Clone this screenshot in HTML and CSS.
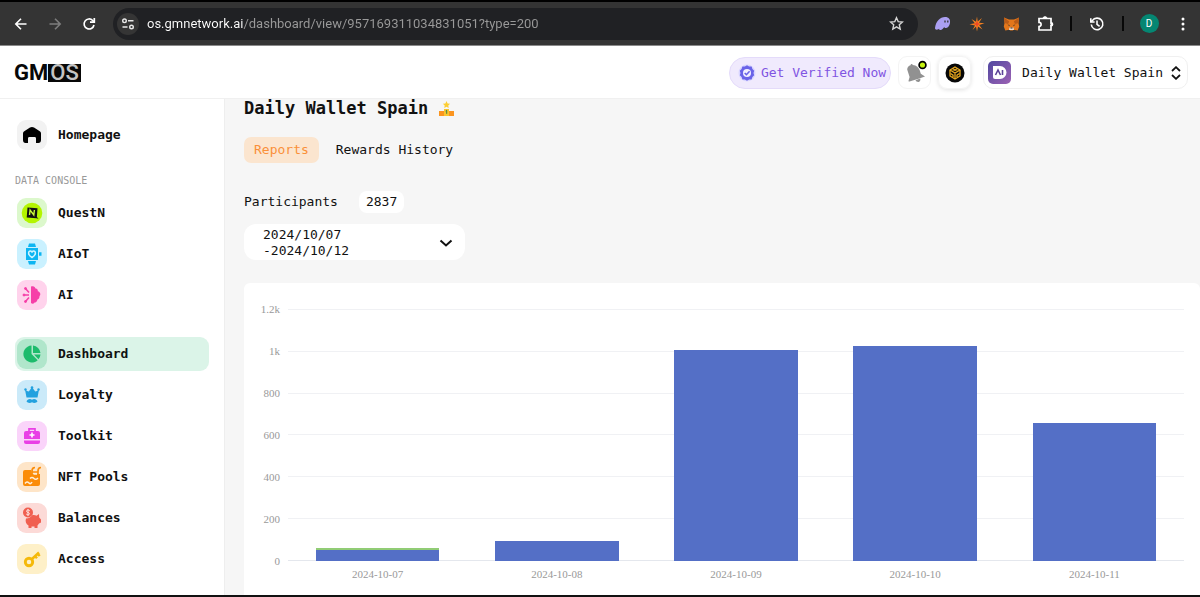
FILE: index.html
```html
<!DOCTYPE html>
<html lang="en">
<head>
<meta charset="utf-8">
<meta name="viewport" content="width=device-width, initial-scale=1">
<title>GMOS Dashboard</title>
<link rel="stylesheet" href="styles.css">
</head>
<body>
<div class="browser-bar">
  <button class="tool" aria-label="Back"><svg width="14" height="14" viewBox="0 0 14 14" fill="none" stroke="#fff" stroke-width="1.6"><path d="M12.500 7H2M7 1.800 1.800 7 7 12.200"/></svg></button>
  <button class="tool" aria-label="Forward"><svg width="14" height="14" viewBox="0 0 14 14" fill="none" stroke="#7d7d7d" stroke-width="1.6"><path d="M1.500 7H12M7 1.800 12.200 7 7 12.200"/></svg></button>
  <button class="tool" aria-label="Reload"><svg width="14" height="14" viewBox="0 0 14 14" fill="none" stroke="#fff" stroke-width="1.7"><path d="M12 8A5 5 0 1 1 10.700 3.500L12 4.800"/><path d="M12.300 1v4.200H8"/></svg></button>
  <div class="address">
    <button class="site-info" aria-label="Site information"><svg width="14" height="14" viewBox="0 0 14 14" fill="none" stroke="#e8e8e8" stroke-width="1.4"><circle cx="3.500" cy="3.800" r="1.800"/><path d="M7 3.800h5.500M1.500 10h5"/><circle cx="10.500" cy="10" r="1.800"/></svg></button>
    <input class="url" type="text" aria-label="Address" value="os.gmnetwork.ai/dashboard/view/957169311034831051?type=200">
    <button class="tool bookmark" aria-label="Bookmark"><svg width="15" height="15" viewBox="0 0 15 15" fill="none" stroke="#d5d5d5" stroke-width="1.4"><path d="m7.500 1.700 1.700 3.900 4.300.4-3.200 2.800.9 4.200-3.700-2.200L3.800 13l.9-4.200L1.500 6l4.300-.4z"/></svg></button>
  </div>
  <button class="tool" aria-label="Phantom"><svg width="18" height="16" viewBox="0 0 18 16"><path d="M1 12C2 5 6 1 11 1c4 0 5.500 2.500 5 6-.4 3-2.500 5-4.200 5-1 0-1.500-.5-1.500-1-1 1.500-2.300 3-3.800 3-1.200 0-1.500-.7-1.300-1.300C4 13.600 1 14.500 1 12z" fill="#ab9ff2"/><path d="M11 4.500v2M13.800 4.500v2" stroke="#333" stroke-width="1.3"/></svg></button>
  <button class="tool" aria-label="Spark"><svg width="16" height="16" viewBox="0 0 16 16"><path d="m8 .5.7 5L13 2l-3 4.700 5.500.5L10.200 9l3.300 4.500-4.500-3L8 15.500l-1-5L3.500 14 6 9.500.5 8.300l5.300-1L2.500 3 7 5.800z" fill="#f58220"/><path d="m8 4.500 1 2.500 2.500 1L9 9l-1 2.500L7 9 4.500 8 7 7z" fill="#ef4923"/></svg></button>
  <button class="tool" aria-label="MetaMask"><svg width="17" height="16" viewBox="0 0 17 16"><path d="m1 1.500 5 2h5l5-2-.5 5.500.7 3.500-1.500 4-4-.8-1 .8H7.300l-1-.8-4 .8-1.500-4L1.500 7z" fill="#e2761b"/><path d="m1 1.500 5.200 4L5 8 1.500 7zM16 1.500l-5.200 4L12 8l3.500-1z" fill="#b85b18"/><path d="M6.500 11.500h4l.5 2.500H6z" fill="#e6d7cb"/><path d="m4.500 8.500 2 .5v1.300zM12.500 8.500l-2 .5v1.300zM7.500 11.500h2v1h-2z" fill="#30312d"/></svg></button>
  <button class="tool" aria-label="Extensions"><svg width="17" height="17" viewBox="0 0 17 17" fill="none" stroke="#fff" stroke-width="1.7"><path d="M2 3.500h12v4.300a1.300 1.300 0 0 1 0 3V15H2v-3.500a2.100 2.100 0 0 0 0-4.200z"/><path d="M6 3.300a2 1.600 0 0 1 4 0zM14 7.800a1.500 1.500 0 0 1 0 3z" fill="#fff" stroke-width="1"/></svg></button>
  <span class="divider"></span>
  <button class="tool" aria-label="History"><svg width="16" height="16" viewBox="0 0 16 16" fill="none" stroke="#fff" stroke-width="1.6"><path d="M2.300 8.500A5.800 5.800 0 1 0 3.300 4.600L2.200 6"/><path d="M1.800 2.300V6h3.800M8 4.500V8.300l2.600 2"/></svg></button>
  <span class="divider"></span>
  <button class="tool" aria-label="Profile"><span class="profile">D</span></button>
  <button class="tool" aria-label="Menu"><svg width="4" height="14" viewBox="0 0 4 14" fill="#fff"><circle cx="2" cy="2" r="1.500"/><circle cx="2" cy="7" r="1.500"/><circle cx="2" cy="12" r="1.500"/></svg></button>
</div>

<header class="app-header">
  <a class="logo" href="#" aria-label="GMOS">GM<span class="logo-box">OS</span></a>
  <button class="verify"><svg width="18" height="18" viewBox="0 0 18 18"><circle cx="9" cy="9" r="8.500" fill="#d9d6ff"/><path d="m9 1.200 2.100 1.300 2.500.1.800 2.400 1.800 1.700L15.500 9l.7 2.300-1.800 1.700-.8 2.400-2.500.1L9 16.800l-2.100-1.300-2.500-.1-.8-2.400-1.800-1.700L2.500 9l-.7-2.300L3.600 5l.8-2.400 2.500-.1z" fill="#6a63e8"/><circle cx="9" cy="9" r="4" fill="#f2efff"/><path d="m6.700 9 1.700 1.700 3.200-3.400" fill="none" stroke="#6a63e8" stroke-width="1.600"/></svg>Get Verified Now</button>
  <button class="square" aria-label="Notifications"><svg width="24" height="26" viewBox="0 0 24 26"><path d="M4.200 9.500c0-2.300 1.500-3.900 3.300-4.300.3-1.500 1.900-1.500 2.300-.3 3.700.2 6 2.500 7 5.600l1 3.300 4.200 2.700-6.500 2.200-9 2.800c-.8.200-1.200-.3-.9-1l1-3.500z" fill="#919191"/><path d="m12.500 20.300 4.700-1.700c.6 1.700-.2 3-1.500 3.300-1.200.3-2.600-.4-3.200-1.600z" fill="#919191"/><circle cx="19.500" cy="5" r="3.400" fill="#c6f311" stroke="#000" stroke-width="1.700"/></svg></button>
  <button class="square raised" aria-label="Network"><svg width="20" height="20" viewBox="0 0 20 20"><circle cx="10" cy="10" r="9.500" fill="#080808"/><g fill="none" stroke="#e9a91f" stroke-width="1.300"><path d="m10 4 5 3v6l-5 3-5-3V7z"/><path d="m5 7 5 3 5-3M10 10v6M7.500 5.500l5 3M12.500 5.500l-5 3M5.500 10.500 8 12v2M14.500 10.500 12 12v2"/></g></svg></button>
  <button class="workspace"><svg width="23" height="23" viewBox="0 0 23 23"><defs><linearGradient id="brand" x1="0" y1="0" x2="1" y2="1"><stop stop-color="#5148a0"/><stop offset="1" stop-color="#9c62b4"/></linearGradient></defs><rect width="23" height="23" rx="5" fill="url(#brand)"/><path d="M5 5h7a6.500 6.500 0 0 1 0 13H7a2 2 0 0 1-2-2z" fill="#fff"/><path d="m7.500 14 2.500-5 2.500 5M14.500 9v5" fill="none" stroke="#5c4398" stroke-width="1.600"/></svg><span>Daily Wallet Spain</span><svg width="10" height="14" viewBox="0 0 10 14" fill="none" stroke="#111" stroke-width="1.800"><path d="m1 5 4-3.800L9 5M1 9l4 3.800L9 9"/></svg></button>
</header>

<div class="app-body">
  <nav class="sidebar" aria-label="Main">
    <a class="item" href="#"><span class="tile home"><svg width="20" height="20" viewBox="0 0 20 20"><path d="M1 8.500C1 7 2 6.300 3 5.700l5-3.200c1.300-.8 2.700-.8 4 0l5 3.200c1 .6 2 1.300 2 2.800V15c0 2-1 3-2.500 3H14v-4.500c0-1-.5-1.500-1.500-1.500h-5C6.500 12 6 12.500 6 13.500V18H3.500C2 18 1 17 1 15z" fill="#000"/></svg></span>Homepage</a>
    <h2 class="group-title">DATA CONSOLE</h2>
    <a class="item" href="#"><span class="tile quest"><svg width="22" height="22" viewBox="0 0 22 22"><circle cx="11" cy="11" r="10.300" fill="#b4f500"/><path d="m6.500 5.500 10 .8-.6 8.700 1.600 1.800-2-.6-9.800-.7z" fill="#111"/><path d="m8.500 13 .6-5 3.700 5 .6-5" fill="none" stroke="#c9fa3a" stroke-width="1.400"/></svg></span>QuestN</a>
    <a class="item" href="#"><span class="tile watch"><svg width="22" height="22" viewBox="0 0 22 22"><path d="M8 .5h6l1 3.500H7zM7 18h8l-1 3.500H8zM5 5h12v12H5zM18 9.200h2.500v3.600H18z" fill="#0db5f2"/><path d="M11 14.500c-5-3-3.500-6.500-1.700-6.500.9 0 1.300.5 1.700 1 .4-.5.800-1 1.700-1 1.800 0 3.300 3.500-1.700 6.500z" fill="none" stroke="#d3f5ff" stroke-width="1.500"/></svg></span>AIoT</a>
    <a class="item" href="#"><span class="tile ai"><svg width="20" height="20" viewBox="0 0 20 20" fill="#f63fa8" stroke="#f63fa8"><path d="M9 1.500c3-1 4 .5 4.500 2 2 0 2.500 1.500 2.300 2.800C18.500 7 19 10 17.500 11c0 2-.5 3-2 3.500-.5 2.500-2 3-3 3C12 19 10 19 9 18z" stroke="none"/><g fill="none" stroke-width="1.500"><path d="M7 10H2.500M7 7.500 3.500 3.500M7 12.500l-3.500 4"/></g><circle cx="2" cy="10" r="1"/><circle cx="3.500" cy="3.500" r="1"/><circle cx="3.500" cy="16.500" r="1"/></svg></span>AI</a>
    <a class="item active section-start" href="#" aria-current="page"><span class="tile dash"><svg width="20" height="20" viewBox="0 0 20 20" fill="#1dbb6c"><path d="M9.500 1.500V10l6.200 6.200A8.500 8.500 0 1 1 9.500 1.500z"/><path d="M11 1.500a8.300 8.300 0 0 1 7.500 7.500H11zM12 10.500h6.500a8 8 0 0 1-2 4.700z"/></svg></span>Dashboard</a>
    <a class="item" href="#"><span class="tile loyalty"><svg width="20" height="20" viewBox="0 0 20 20" fill="#23a1df"><path d="M3 4.500 6.500 7 10 2l3.500 5L17 4.500l-1.500 8h-11z"/><path d="M5 6.500h10l-.5 5h-9z"/><circle cx="3.500" cy="4.500" r="1.200"/><circle cx="10" cy="2.500" r="1.300"/><circle cx="16.500" cy="4.500" r="1.200"/><path d="M10 14.800c2-1.500 4-.8 5.500 1.500-1 2-4 2-5.500 1-1.500 1-4.500 1-5.500-1 1.500-2.300 3.500-3 5.500-1.500z"/></svg></span>Loyalty</a>
    <a class="item" href="#"><span class="tile toolkit"><svg width="20" height="20" viewBox="0 0 20 20"><path d="M7 5V2.800h6V5" fill="none" stroke="#e93fe6" stroke-width="1.700"/><path d="M4 5h12a2 2 0 0 1 2 2v6H2V7a2 2 0 0 1 2-2zM2 14.500h16V16a2 2 0 0 1-2 2H4a2 2 0 0 1-2-2z" fill="#e93fe6"/><path d="M10 6.500v5M7.500 9h5" stroke="#fff" stroke-width="1.600"/></svg></span>Toolkit</a>
    <a class="item" href="#"><span class="tile pools"><svg width="22" height="22" viewBox="0 0 22 22"><path d="M4 4h6l1 4h8v10a2 2 0 0 1-2 2H4a2 2 0 0 1-2-2V6a2 2 0 0 1 2-2z" fill="#fb8c08"/><path d="M11 13V5c0-3 1.500-3.500 3-3.500M17 13V5c0-3 1.500-3.500 3-3.500M11 6h6M11 9.500h6" fill="none" stroke="#fb8c08" stroke-width="1.700"/><path d="M4 17.500c1.500-2 2.500-2 4-.5s2.500 0 3-1M9 12.500c1.500-1.500 2.500-1.500 4 0s3 .5 4-.5M12.500 8h3.500" fill="none" stroke="#ffeed8" stroke-width="1.500"/></svg></span>NFT Pools</a>
    <a class="item" href="#"><span class="tile balances"><svg width="22" height="22" viewBox="0 0 22 22"><path d="M5 11.500c3-.2 5-1.500 6.500-3.500 1.500-.3 3 0 4 .7L18 7l.2 3.500 1.800 2v3l-2 1-1.500 2V21h-3v-1.500h-3V21h-3v-2.500C5 17 4 14 5 11.500z" fill="#f05f50"/><circle cx="7" cy="5.500" r="5" fill="#f05f50"/><path d="M8.800 3.800C7.500 2.500 5.200 3 5.500 4.500c.3 1.300 3 .7 3 2.200 0 1.300-2.300 1.500-3.300.3M7 2v7" fill="none" stroke="#fde3df" stroke-width="1"/></svg></span>Balances</a>
    <a class="item" href="#"><span class="tile access"><svg width="20" height="20" viewBox="0 0 20 20" fill="none" stroke="#f5b909"><circle cx="7" cy="13" r="3.700" stroke-width="2.900"/><path d="m10 10 7-6.500M13 7l2 2.300M15.500 4.500l2.200 2.500" stroke-width="2.500"/></svg></span>Access</a>
  </nav>

  <main class="content">
    <h1 class="title">Daily Wallet Spain <svg width="17" height="17" viewBox="0 0 17 17"><path d="M6 9h5v7H6z" fill="#f8c530"/><path d="M1 11h5v5H1zM11 11h5v5h-5z" fill="#fb951f"/><path d="m8.500 1 1.100 2.400 2.500.3-1.800 1.800.4 2.500-2.200-1.200L6.300 8l.4-2.500-1.800-1.800 2.500-.3z" fill="#fdce33"/><path d="m7.700 11 1-.7v3.500" fill="none" stroke="#3b8045"/></svg></h1>
    <div class="tabs" role="tablist">
      <button class="tab selected" role="tab" aria-selected="true">Reports</button>
      <button class="tab" role="tab" aria-selected="false">Rewards History</button>
    </div>
    <div class="participants"><span>Participants</span><span class="count">2837</span></div>
    <button class="range" aria-haspopup="listbox"><span>2024/10/07<br>-2024/10/12</span><svg width="14" height="9" viewBox="0 0 14 9" fill="none" stroke="#111" stroke-width="2"><path d="m1.500 1.500 5.500 5 5.500-5"/></svg></button>

    <section class="chart" aria-label="Participants per day">
      <ul class="y-axis"><li>1.2k</li><li>1k</li><li>800</li><li>600</li><li>400</li><li>200</li><li>0</li></ul>
      <div class="plot">
        <div class="grid-lines"><i></i><i></i><i></i><i></i><i></i><i></i></div>
        <div class="bars">
          <div class="slot"><div class="bar capped" style="height:5%"></div></div>
          <div class="slot"><div class="bar" style="height:8%"></div></div>
          <div class="slot"><div class="bar" style="height:83.800%"></div></div>
          <div class="slot"><div class="bar" style="height:85.500%"></div></div>
          <div class="slot"><div class="bar" style="height:54.800%"></div></div>
        </div>
      </div>
      <ul class="x-axis"><li>2024-10-07</li><li>2024-10-08</li><li>2024-10-09</li><li>2024-10-10</li><li>2024-10-11</li></ul>
    </section>
  </main>
</div>
</body>
</html>
```
FILE: styles.css
```css
* { box-sizing: border-box; }

body {
  margin: 0;
  height: 100vh;
  display: flex;
  flex-direction: column;
  overflow: hidden;
  background: #fff;
  border-bottom: 2px solid #111;
  color: #111;
  font: 13px/16px "DejaVu Sans Mono", monospace;
}

button {
  margin: 0;
  padding: 0;
  border: 0;
  background: none;
  color: inherit;
  font: inherit;
  cursor: pointer;
}

ul { margin: 0; padding: 0; list-style: none; }
svg { display: block; flex: none; }

/* Browser toolbar */
.browser-bar {
  flex: none;
  display: flex;
  align-items: center;
  height: 46px;
  padding-left: 4px;
  background: #343434;
  border-top: 2px solid #000;
  border-bottom: 1px solid #8a8a8a;
}
.tool {
  display: flex;
  align-items: center;
  justify-content: center;
  width: 34px;
  height: 32px;
}
.address {
  flex: 1;
  display: flex;
  align-items: center;
  gap: 8px;
  height: 32px;
  margin: 0 8px 0 7px;
  padding: 0 5px 0 4px;
  border-radius: 16px;
  background: #202124;
}
.site-info {
  display: grid;
  place-items: center;
  width: 22px;
  height: 22px;
  border-radius: 50%;
  background: #353535;
}
.url {
  flex: 1;
  min-width: 0;
  padding: 0;
  border: 0;
  outline: 0;
  color: transparent;
  background: linear-gradient(90deg, #fff 96px, #9a9a9a 96px);
  background-clip: text;
  -webkit-background-clip: text;
  font: 13px/20px Roboto, sans-serif;
}
.divider { width: 2px; height: 15px; margin: 0 8px; background: #080808; }
.profile {
  display: grid;
  place-items: center;
  width: 19px;
  height: 19px;
  border-radius: 50%;
  background: #058672;
  color: #fff;
  font: 10px/19px Roboto, sans-serif;
}

/* Application header */
.app-header {
  flex: none;
  display: flex;
  align-items: center;
  height: 53px;
  padding: 1px 12px 0 14px;
  border-bottom: 1px solid #f0f0f0;
}
.logo {
  display: flex;
  align-items: center;
  margin-right: auto;
  color: #080808;
  text-decoration: none;
  font: 700 22px/18px Roboto, sans-serif;
}
.logo-box { padding: 0 2px; background: #080808; color: #c4c4c4; font-weight: 500; }
.verify {
  display: flex;
  align-items: center;
  gap: 5px;
  height: 32px;
  padding: 0 4px 0 8px;
  border: 1px solid #e4dbfa;
  border-radius: 16px;
  background: #f0eafd;
  color: #8055e2;
}
.square {
  display: grid;
  place-items: center;
  width: 33px;
  height: 33px;
  margin-left: 7px;
  border: 1px solid #f4f4f4;
  border-radius: 9px;
}
.raised { box-shadow: 0 1px 4px #e2e2e2; }
.workspace {
  display: flex;
  align-items: center;
  gap: 11px;
  height: 33px;
  margin-left: 12px;
  padding: 0 6px 0 4px;
  border: 1px solid #f0f0f0;
  border-radius: 10px;
}
.workspace span { margin-right: -3px; }

/* Page columns */
.app-body { flex: 1; display: flex; min-height: 0; }
.sidebar {
  flex: none;
  display: flex;
  flex-direction: column;
  gap: 7px;
  width: 225px;
  padding: 19px 15px 0;
  border-right: 1px solid #eee;
}
.item {
  flex: none;
  display: flex;
  align-items: center;
  gap: 11px;
  height: 34px;
  padding-left: 2px;
  border-radius: 9px;
  color: #111;
  text-decoration: none;
  font-weight: 700;
}
.active { background: #dbf4e8; }
.section-start { margin-top: 18px; }
.group-title {
  margin: 14px 0 0;
  color: #999;
  font: 10px/16px "DejaVu Sans Mono", monospace;
}
.tile {
  display: grid;
  place-items: center;
  width: 30px;
  height: 30px;
  border-radius: 9px;
}
.home { background: #f2f2f2; }
.quest { background: #dcf8cc; }
.watch { background: #caf1ff; }
.ai { background: #ffd3ec; }
.dash { background: #b0e6cb; }
.loyalty { background: #cbeaf9; }
.toolkit { background: #fad4fa; }
.pools { background: #fee5c8; }
.balances { background: #fcdad7; }
.access { background: #fef0c8; }

.content {
  flex: 1;
  display: flex;
  flex-direction: column;
  align-items: flex-start;
  min-width: 0;
  padding-left: 19px;
  background: #f6f6f6;
}
.title {
  display: flex;
  align-items: center;
  gap: 10px;
  margin: 0;
  font-size: 17px;
  line-height: 18px;
}
.tabs { display: flex; gap: 7px; margin-top: 20px; }
.tab { height: 26px; padding: 0 10px; border-radius: 7px; }
.selected { background: #fbe5cf; color: #fa9039; }
.participants { display: flex; align-items: center; gap: 21px; margin-top: 28px; }
.count { padding: 3px 7px; border-radius: 8px; background: #fff; }
.range {
  display: flex;
  align-items: center;
  justify-content: space-between;
  width: 221px;
  margin-top: 11px;
  padding: 3px 12px 1px 19px;
  border-radius: 12px;
  background: #fff;
  text-align: left;
}

/* Bar chart */
.chart {
  flex: 1;
  align-self: stretch;
  display: grid;
  grid-template: 252px auto / 21px 1fr;
  align-content: start;
  column-gap: 8px;
  margin-top: 23px;
  padding: 26px 16px 0 15px;
  border-radius: 6px 6px 0 0;
  background: #fff;
  color: #999;
  font: 11px/14px "Liberation Serif", serif;
}
.y-axis {
  display: flex;
  flex-direction: column;
  justify-content: space-between;
  margin: -7px 0;
  text-align: right;
}
.plot { display: grid; }
.grid-lines, .bars { grid-area: 1 / 1; }
.grid-lines { display: grid; border-bottom: 1px solid #e4e7ed; }
.grid-lines i { border-top: 1px solid #f0f1f4; }
.bars, .x-axis { display: grid; grid-template-columns: repeat(5, 1fr); }
.slot { display: flex; align-items: flex-end; justify-content: center; }
.bar { width: 69%; background: #546fc6; }
.capped { border-top: 2px solid #91cc75; }
.x-axis { grid-column: 2; margin-top: 6px; text-align: center; }
```
